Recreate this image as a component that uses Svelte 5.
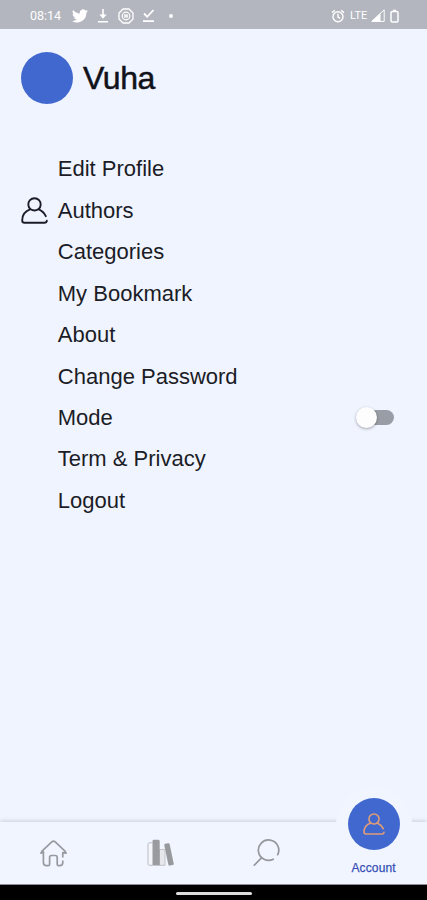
<script>
  const items = [
    'Edit Profile', 'Authors', 'Categories', 'My Bookmark', 'About',
    'Change Password', 'Mode', 'Term & Privacy', 'Logout'
  ];
  let dark = $state(false);
</script>

{#snippet person(size, width)}
  <svg width={size} height={size} viewBox="0 0 27 27" fill="none" stroke="currentColor" stroke-width={width} stroke-linecap="round" stroke-linejoin="round">
    <path d="M9.6 12.2A6.2 6.2 0 1 1 17.4 12.2Q13.5 14.8 9.6 12.2C4.4 14 1.2 18.2 1.2 23.4Q1.2 25.7 3.5 25.7H23.5Q25.5 25.7 25.8 23.8" />
    <path d="M17.4 12.2C20.8 13.7 23.4 16.2 24.8 19.2" />
  </svg>
{/snippet}

<div class="screen">
  <header class="status">
    <span class="time">08:14</span>
    <svg class="bird" width="16" height="14" viewBox="0 0 24 20" fill="#fff"><path d="M24 2.4a10 10 0 0 1-2.8.8A5 5 0 0 0 23.3.5a10 10 0 0 1-3.1 1.2 4.9 4.9 0 0 0-8.4 4.5A14 14 0 0 1 1.7 1a4.9 4.9 0 0 0 1.5 6.6A5 5 0 0 1 1 7a4.9 4.9 0 0 0 4 4.9 5 5 0 0 1-2.3.1 4.9 4.9 0 0 0 4.6 3.4A10 10 0 0 1 0 17.5a14 14 0 0 0 21.5-12.4A10 10 0 0 0 24 2.4z" /></svg>
    <svg class="down" width="12" height="15" viewBox="0 0 12 15" fill="none" stroke="#fff"><path d="M6 1v8M1 13.8h10" stroke-width="1.6" /><path d="M2.3 6.5h7.4L6 10.8z" fill="#fff" stroke="none" /></svg>
    <svg class="ring" width="16" height="16" viewBox="0 0 16 16" fill="none" stroke="#fff"><path d="M5 1h6l4 4v6l-4 4H5l-4-4V5z" stroke-width="1.3" stroke-linejoin="round" /><circle cx="8" cy="8" r="3.8" stroke-width="1.2" /><rect x="6" y="6.3" width="4" height="3.4" fill="#fff" fill-opacity=".8" stroke="none" /></svg>
    <svg class="check" width="13" height="15" viewBox="0 0 13 15" fill="none" stroke="#fff" stroke-width="1.8"><path d="M2 5.5l3.2 3.3L11.5 2M1 13.2h11" /></svg>
    <i class="dot"></i>
    <span class="space"></span>
    <svg class="alarm" width="14" height="14" viewBox="0 0 14 14" fill="none" stroke="#fff" stroke-width="1.4"><circle cx="7" cy="7.7" r="5" /><path d="M7 4.8v3.2l2.2 1.3M1 3.6L3.8 1.3M13 3.6L10.2 1.3" /></svg>
    <span class="lte">LTE</span>
    <svg class="signal" width="14" height="13" viewBox="0 0 14 13"><path d="M.8 12.4H13.2V.8z" fill="none" stroke="#fff" /><path d="M.3 12.8L9.5 4v8.8z" fill="#fff" /></svg>
    <svg class="battery" width="9" height="14" viewBox="0 0 9 14" fill="none" stroke="#fff" stroke-width="1.5"><rect x="1" y="2.4" width="7" height="10.6" rx="1.3" /><path d="M3 1.4h3" /></svg>
  </header>

  <main>
    <section class="profile">
      <span class="avatar"></span>
      <h1>Vuha</h1>
    </section>
    <ul>
      {#each items as item}
        <li>
          <span class="icon">{#if item === 'Authors'}{@render person(27, 1.9)}{/if}</span>
          <span class="label">{item}</span>
          {#if item === 'Mode'}
            <button class="switch" class:dark aria-label="Mode" onclick={() => (dark = !dark)}><span class="knob"></span></button>
          {/if}
        </li>
      {/each}
    </ul>
  </main>

  <nav>
    <div class="tab">
      <svg width="27" height="27" viewBox="0 0 27 27" fill="none" stroke="#989a9f" stroke-width="1.7" stroke-linecap="round" stroke-linejoin="round">
        <path d="M3.4 12.2L1 13.2L2 11.2L11.8 1.8Q13.5.3 15.2 1.8L25 11.2L26 13.2L22.8 12.6V16.8" />
        <path d="M3.4 12.2V22.5Q3.4 25.7 6.6 25.7H8.2Q9.6 25.7 9.6 24.3V17.3Q9.6 15.5 11.4 15.5H15.4Q17.2 15.5 17.2 17.3V24.3Q17.2 25.7 18.6 25.7H19.8Q22.8 25.7 22.8 22.5V21" />
      </svg>
    </div>
    <div class="tab">
      <svg width="28" height="28" viewBox="0 0 28 28">
        <path d="M5.5 3.8H2.5Q1 3.8 1 5.3V24.8Q1 26.3 2.5 26.3H5.5" fill="#f4f5fa" stroke="#b9bbc0" />
        <path d="M12.5 10.5H18V26.3H12.5z" fill="#e5e7eb" stroke="#c2c4c8" />
        <path d="M5.5 2Q5.5.7 7 .7H11Q12.7.7 12.7 2V26.6H5.5z" fill="#999b9e" />
        <path d="M17.3 6.3Q17 5 18.3 4.8L21 4.3Q22.4 4.1 22.7 5.4L26.7 24.4Q27 25.6 25.8 25.9L22.8 26.6Q21.6 26.8 21.3 25.5z" fill="#97999c" />
      </svg>
    </div>
    <div class="tab">
      <svg width="28" height="28" viewBox="0 0 28 28" fill="none" stroke="#95979c" stroke-width="1.7" stroke-linecap="round">
        <path d="M20.3 20.2A10.2 10.2 0 1 1 24.7 15.7" />
        <path d="M8.7 18.6L1.3 26.2" />
      </svg>
    </div>
    <div class="tab active">
      <div class="bubble"><span>{@render person(22, 2)}</span></div>
      <b>Account</b>
    </div>
  </nav>
  <footer><span></span></footer>
</div>

<style>
  .screen {
    width: 427px;
    height: 900px;
    display: flex;
    flex-direction: column;
    background: #f0f4ff;
    color: #1b1c26;
    font-family: 'Liberation Sans', Arial, sans-serif;
    overflow: hidden;
  }
  svg { display: block; flex: none; }
  .status {
    height: 29px;
    flex: none;
    display: flex;
    align-items: center;
    box-sizing: border-box;
    padding: 2px 28px 0 30px;
    background: #b3b6be;
    color: #fff;
  }
  .time { width: 31px; font: 400 12.5px Roboto, sans-serif; white-space: nowrap; }
  .bird { margin-left: 11px; }
  .down { margin-left: 9px; }
  .ring { margin-left: 9px; }
  .check { margin-left: 8px; }
  .dot { width: 4px; height: 4px; margin-left: 14px; border-radius: 50%; background: #fff; }
  .space { flex: 1; }
  .alarm { margin-right: 5px; }
  .lte { margin-right: 2px; width: 19px; font: 400 11px Roboto, sans-serif; }
  .battery { margin-left: 5px; }
  main { flex: 1; }
  .profile { display: flex; align-items: center; padding: 23px 0 0 21px; }
  .avatar { width: 52px; height: 52px; border-radius: 50%; background: #4168cf; }
  h1 {
    margin: 0 0 0 10px;
    font-size: 32px;
    font-weight: 400;
    line-height: 52px;
    letter-spacing: -.4px;
    color: #11121a;
    -webkit-text-stroke: .5px #11121a;
  }
  ul { list-style: none; margin: 44.7px 0 0; padding: 0 33px 0 20px; }
  li { height: 41.45px; display: flex; align-items: center; }
  .icon { width: 37.8px; flex: none; padding-left: 1px; box-sizing: border-box; }
  .label { flex: 1; font-size: 22px; line-height: 30px; white-space: nowrap; }
  .switch {
    width: 36px;
    height: 15px;
    margin-bottom: 2px;
    padding: 0;
    border: 0;
    border-radius: 8px;
    background: #999da5;
    display: flex;
    align-items: center;
  }
  .knob {
    width: 21px;
    height: 21px;
    flex: none;
    margin-left: -2px;
    border-radius: 50%;
    background: #fdfdfd;
    box-shadow: 0 1px 3px #0005;
  }
  .switch.dark { justify-content: flex-end; }
  nav {
    height: 62px;
    flex: none;
    display: flex;
    background: #f1f5ff;
    box-shadow: 0 -1px 4px #c9cedb;
  }
  .tab { width: 106.75px; display: flex; justify-content: center; align-items: center; }
  .tab > svg { margin-left: 1px; }
  .active { flex-direction: column; justify-content: flex-start; color: #354fb5; }
  .bubble {
    width: 76px;
    height: 76px;
    flex: none;
    margin-top: -36px;
    border-radius: 50%;
    display: flex;
    align-items: center;
    justify-content: center;
    background: #f1f5ff;
  }
  .bubble span {
    width: 52px;
    height: 52px;
    border-radius: 50%;
    display: flex;
    align-items: center;
    justify-content: center;
    background: #4168cf;
    color: #e09c78;
  }
  b { margin-top: -1px; font-size: 12px; font-weight: 400; line-height: 14px; letter-spacing: .15px; -webkit-text-stroke: .25px #354fb5; }
  footer {
    height: 16px;
    flex: none;
    display: flex;
    justify-content: center;
    align-items: center;
    box-sizing: border-box;
    padding-top: 2px;
    border-top: 1px solid #8b8e94;
    background: #000;
  }
  footer span { width: 76px; height: 3px; border-radius: 2px; background: #ddd; }
</style>
